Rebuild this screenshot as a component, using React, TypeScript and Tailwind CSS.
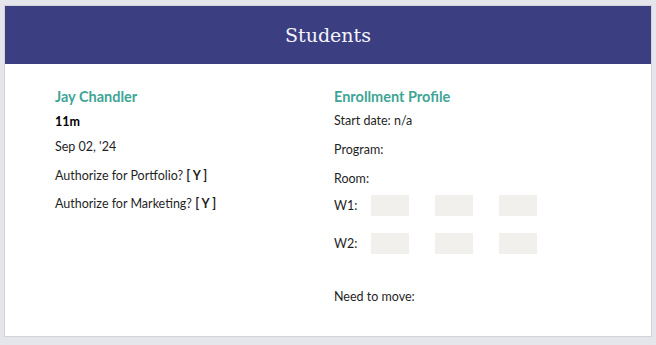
export default function App() {
  const body = { fontFamily: 'Lato, "Noto Sans", sans-serif' };
  const slots = ['a', 'b', 'c'];

  return (
    <div className="h-[345px] w-[656px] overflow-hidden bg-[#e5e6eb] pl-[4px] pr-[4px] pt-[5px]" style={body}>
      <div className="h-[332px] border border-[#d3d4d9] bg-white">
        <div className="flex h-[58px] items-center justify-center bg-[#3b3f82]">
          <h1 className="text-[19px] text-[#f4f4fa]" style={{ fontFamily: '"DejaVu Serif", serif' }}>
            Students
          </h1>
        </div>

        <div className="flex pl-[50px] pt-[23px] text-[12.5px] leading-[20px] text-[#1f1f1f]">
          <div className="w-[279px]">
            <h2 className="text-[14.5px] font-bold text-[#3ea596]">Jay Chandler</h2>
            <p className="mt-[5px] font-bold text-black">11m</p>
            <p className="mt-[5px]">Sep 02, '24</p>
            <p className="mt-[9px]">
              Authorize for Portfolio? <span className="font-bold">[ Y ]</span>
            </p>
            <p className="mt-[8px]">
              Authorize for Marketing? <span className="font-bold">[ Y ]</span>
            </p>
          </div>

          <div>
            <h2 className="text-[14.5px] font-bold text-[#3ea596]">Enrollment Profile</h2>
            <p className="mt-[4px]">Start date: n/a</p>
            <p className="mt-[9px]">Program:</p>
            <p className="mt-[9px]">Room:</p>
            <div className="mt-[6px] flex items-center">
              <span className="w-[37px]">W1:</span>
              <div className="flex gap-[26px]">
                {slots.map((s) => (
                  <div key={s} className="h-[21px] w-[38px] bg-[#f1f0ed]" />
                ))}
              </div>
            </div>
            <div className="mt-[17px] flex items-center">
              <span className="w-[37px]">W2:</span>
              <div className="flex gap-[26px]">
                {slots.map((s) => (
                  <div key={s} className="h-[21px] w-[38px] bg-[#f1f0ed]" />
                ))}
              </div>
            </div>
            <p className="mt-[33px]">Need to move:</p>
          </div>
        </div>
      </div>
    </div>
  );
}
